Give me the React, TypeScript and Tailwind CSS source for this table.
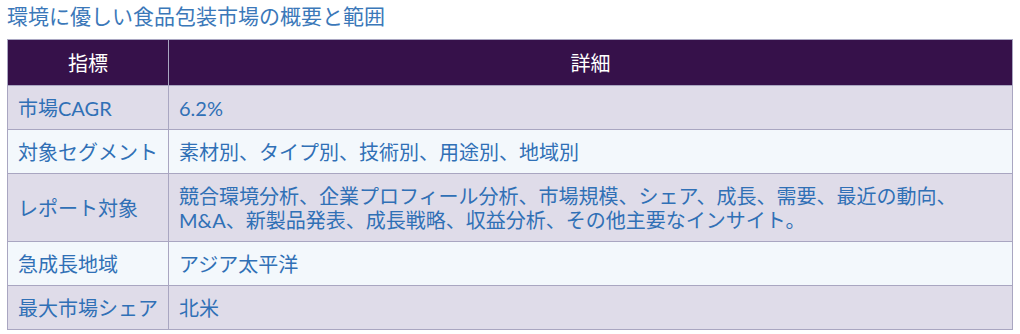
const rows = [
  { label: "市場CAGR", value: ["6.2%"] },
  { label: "対象セグメント", value: ["素材別、タイプ別、技術別、用途別、地域別"] },
  {
    label: "レポート対象",
    value: [
      "競合環境分析、企業プロフィール分析、市場規模、シェア、成長、需要、最近の動向、",
      "M&A、新製品発表、成長戦略、収益分析、その他主要なインサイト。",
    ],
  },
  { label: "急成長地域", value: ["アジア太平洋"] },
  { label: "最大市場シェア", value: ["北米"] },
];

export default function App() {
  return (
    <div className="w-[1020px] h-[334px] bg-white pl-[7px] pr-[7px] font-['Lato','Noto_Sans_CJK_JP',sans-serif]">
      <h2 className="text-[21px] leading-[32px] text-[#3b78b9] font-normal">
        環境に優しい食品包装市場の概要と範囲
      </h2>
      <table className="mt-[7px] w-[1006px] border-collapse text-[20px]">
        <thead>
          <tr className="bg-[#36114a] text-white">
            <th className="w-[161px] h-[46px] border border-[#a9a6c1] font-normal text-center">指標</th>
            <th className="h-[46px] border border-[#a9a6c1] font-normal text-center">詳細</th>
          </tr>
        </thead>
        <tbody>
          {rows.map((r, i) => (
            <tr key={i} className={i % 2 === 0 ? "bg-[#dfdce9]" : "bg-[#f3f8fc]"}>
              <td className="border border-[#a9a6c1] px-[10px] pt-[10px] pb-[9px] leading-[24px] text-[#3070b6]">{r.label}</td>
              <td className="border border-[#a9a6c1] px-[10px] pt-[10px] pb-[9px] leading-[24px] text-[#3070b6]">
                {r.value.map((line, j) => (
                  <div key={j} className="whitespace-nowrap">{line}</div>
                ))}
              </td>
            </tr>
          ))}
        </tbody>
      </table>
    </div>
  );
}
